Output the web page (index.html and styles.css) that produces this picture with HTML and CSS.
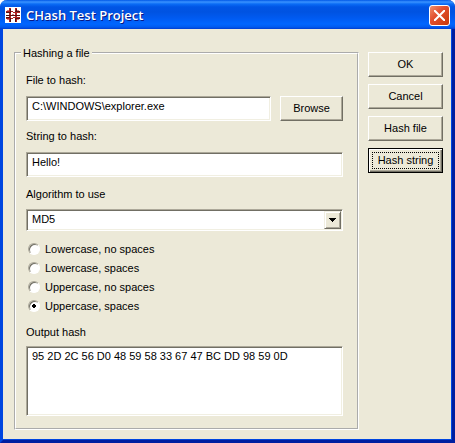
FILE: index.html
```html
<!DOCTYPE html>
<html lang="en">
<head>
    <meta charset="UTF-8">
    <meta name="viewport" content="width=device-width, initial-scale=1.0">
    <title>CHash Test Project</title>
    <link rel="stylesheet" href="styles.css">
</head>
<body>
    <div class="window">
        <div class="title-bar">
            <svg class="app-icon" width="16" height="16" viewBox="0 0 16 16" shape-rendering="crispEdges">
                <path fill="#fff" d="M0 0h16v16H0z"/>
                <path fill="#b02020" d="M4 1h2v14H4zM10 1h2v14h-2zM1 4h7v1H1zM8 5h7v1H8zM1 11h7v1H1zM8 10h7v1H8z"/>
                <path fill="#581010" d="M1 5h5v1H1zM10 4h5v1h-5zM1 8h14v1H1zM1 10h4v1H1zM11 11h4v1h-4zM5 2h1v3H5zM11 2h1v3h-1zM5 11h1v4H5zM10 11h1v4h-1z"/>
                <path fill="#d88080" d="M2 3h2v1H2zM12 3h2v1h-2zM7 7h2v1H7zM2 12h2v1H2zM12 12h2v1h-2z"/>
            </svg>
            <h1>CHash Test Project</h1>
            <button class="close" type="button" aria-label="Close">
                <svg width="11" height="11" viewBox="0 0 11 11">
                    <path d="M0 0l11 11M11 0l-11 11" stroke="#fff" stroke-width="2"/>
                </svg>
            </button>
        </div>
        <form class="client">
            <fieldset class="group">
                <legend>Hashing a file</legend>
                <label for="file">File to hash:</label>
                <div class="file-row">
                    <input class="field" type="text" id="file" value="C:\WINDOWS\explorer.exe">
                    <button class="button browse" type="button">Browse</button>
                </div>
                <label for="string">String to hash:</label>
                <input class="field" type="text" id="string" value="Hello!">
                <label class="algorithm-label" for="algorithm">Algorithm to use</label>
                <div class="combo">
                    <select id="algorithm">
                        <option>MD5</option>
                    </select>
                    <span class="arrow">
                        <svg width="7" height="4" viewBox="0 0 7 4" shape-rendering="crispEdges">
                            <path d="M0 0h7v1H0zM1 1h5v1H1zM2 2h3v1H2zM3 3h1v1H3z"/>
                        </svg>
                    </span>
                </div>
                <div class="formats">
                    <label><input type="radio" name="format">Lowercase, no spaces</label>
                    <label><input type="radio" name="format">Lowercase, spaces</label>
                    <label><input type="radio" name="format">Uppercase, no spaces</label>
                    <label><input type="radio" name="format" checked>Uppercase, spaces</label>
                </div>
                <label class="output-label" for="output">Output hash</label>
                <textarea class="field" id="output">95 2D 2C 56 D0 48 59 58 33 67 47 BC DD 98 59 0D</textarea>
            </fieldset>
            <div class="actions">
                <button class="button" type="button">OK</button>
                <button class="button" type="button">Cancel</button>
                <button class="button" type="button">Hash file</button>
                <button class="button default" type="button"><span>Hash string</span></button>
            </div>
        </form>
    </div>
</body>
</html>
```

FILE: styles.css
```css
* {
    box-sizing: border-box;
}
body {
    margin: 0;
    background-color: #fff;
    font-family: "Liberation Sans", Arial, sans-serif;
    font-size: 11px;
    line-height: 14px;
    color: #000;
}
.window {
    display: flex;
    flex-direction: column;
    min-height: 100vh;
    background-color: #ece9d8;
    border: 3px solid #0046e0;
    border-top: none;
    border-right-color: #001ea0;
    border-bottom-color: #001ea0;
    border-radius: 7px 7px 0 0;
    box-shadow: inset -1px -1px #0046e0;
}
.title-bar {
    display: flex;
    align-items: center;
    gap: 5px;
    height: 29px;
    margin: 0 -3px;
    padding: 1px 5px 0;
    border-radius: 7px 7px 0 0;
    background: linear-gradient(to bottom, #0058e6 0, #3a93ff 2px, #0a6cf5 4px, #0055e5 7px, #0053e1 12px, #005af0 18px, #0066ff 24px, #005bf0 27px, #003dd0 29px);
}
.title-bar h1 {
    flex: 1;
    margin: 0;
    font-family: "Open Sans", "Noto Sans", sans-serif;
    font-size: 13px;
    line-height: 18px;
    font-weight: 600;
    color: #fff;
    text-shadow: 1px 1px #0a1883;
}
.close {
    display: flex;
    align-items: center;
    justify-content: center;
    width: 21px;
    height: 21px;
    padding: 0;
    border: 1px solid #fff;
    border-radius: 3px;
    background: linear-gradient(135deg, #f0906c, #e25030 40%, #c83808);
}
.client {
    display: flex;
    flex: 1;
    align-items: flex-start;
    gap: 9px;
    padding: 17px 9px 10px 11px;
}
.group {
    flex: 1;
    min-width: 0;
    margin: 0;
    padding: 13px 14px 12px 10px;
    border: 2px groove #fff;
}
.group legend {
    margin-left: -5px;
    padding: 0 2px;
}
.group label {
    display: block;
    margin-bottom: 9px;
}
.field {
    display: block;
    width: 100%;
    height: 25px;
    margin: 0 0 8px;
    padding: 0 5px 6px;
    border: 1px solid;
    border-color: #aca899 #fff #fff #aca899;
    box-shadow: inset 1px 1px #716f64, inset -1px -1px #f1efe2;
    background-color: #fff;
    font: inherit;
    color: #000;
    outline: none;
}
.file-row {
    display: flex;
    gap: 9px;
}
.button {
    height: 25px;
    padding: 0;
    border: 1px solid;
    border-color: #fff #716f64 #716f64 #fff;
    box-shadow: inset -1px -1px #aca899;
    background-color: #ece9d8;
    font: inherit;
    color: #000;
}
.browse {
    flex: none;
    width: 63px;
    padding-bottom: 2px;
}
.group .algorithm-label {
    margin-top: 10px;
    margin-bottom: 8px;
}
.combo {
    position: relative;
}
.combo select {
    display: block;
    width: 100%;
    height: 22px;
    padding: 0 20px 2px 5px;
    appearance: none;
    border: 1px solid;
    border-color: #aca899 #fff #fff #aca899;
    border-radius: 0;
    box-shadow: inset 1px 1px #716f64, inset -1px -1px #f1efe2;
    background-color: #fff;
    font: inherit;
    color: #000;
}
.arrow {
    position: absolute;
    top: 2px;
    right: 2px;
    bottom: 2px;
    display: flex;
    align-items: center;
    justify-content: center;
    width: 17px;
    border: 1px solid;
    border-color: #f1efe2 #716f64 #716f64 #f1efe2;
    box-shadow: inset 1px 1px #fff, inset -1px -1px #aca899;
    background-color: #ece9d8;
    pointer-events: none;
}
.formats {
    margin: 8px 0 10px;
}
.group .formats label {
    display: flex;
    align-items: center;
    gap: 5px;
    height: 19px;
    margin: 0;
}
.formats input {
    appearance: none;
    width: 12px;
    height: 12px;
    margin: 0 0 0 2px;
    border: 1px solid;
    border-color: #aca899 #fff #fff #aca899;
    border-radius: 50%;
    box-shadow: inset 1px 1px #716f64;
    background-color: #fff;
}
.formats input:checked {
    background-image: radial-gradient(circle, #000 2px, transparent 2px);
}
.group .output-label {
    margin-bottom: 7px;
}
textarea.field {
    height: 70px;
    margin: 0;
    padding: 2px 5px;
    resize: none;
}
.actions {
    display: flex;
    flex-direction: column;
    gap: 7px;
    width: 75px;
    padding-top: 6px;
}
.actions .button {
    padding-bottom: 2px;
}
.actions .default {
    padding: 2px;
    border-color: #000;
    box-shadow: inset 1px 1px #fff, inset -1px -1px #716f64, inset -2px -2px #aca899;
}
.default span {
    display: block;
    margin: 0 1px;
    border: 1px dotted #000;
    line-height: 15px;
}
```
